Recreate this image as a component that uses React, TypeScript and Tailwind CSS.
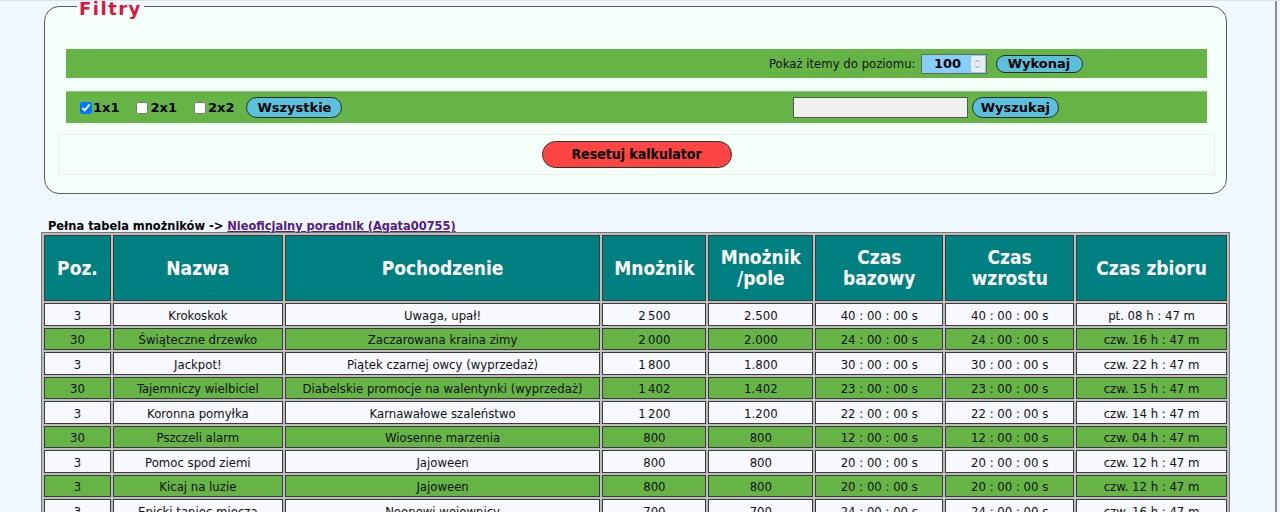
import React from "react";

const rows: { c: string[]; g: boolean }[] = [
  { c: ["3", "Krokoskok", "Uwaga, upał!", "2\u2009500", "2.500", "40 : 00 : 00 s", "40 : 00 : 00 s", "pt. 08 h : 47 m"], g: false },
  { c: ["30", "Świąteczne drzewko", "Zaczarowana kraina zimy", "2\u2009000", "2.000", "24 : 00 : 00 s", "24 : 00 : 00 s", "czw. 16 h : 47 m"], g: true },
  { c: ["3", "Jackpot!", "Piątek czarnej owcy (wyprzedaż)", "1\u2009800", "1.800", "30 : 00 : 00 s", "30 : 00 : 00 s", "czw. 22 h : 47 m"], g: false },
  { c: ["30", "Tajemniczy wielbiciel", "Diabelskie promocje na walentynki (wyprzedaż)", "1\u2009402", "1.402", "23 : 00 : 00 s", "23 : 00 : 00 s", "czw. 15 h : 47 m"], g: true },
  { c: ["3", "Koronna pomyłka", "Karnawałowe szaleństwo", "1\u2009200", "1.200", "22 : 00 : 00 s", "22 : 00 : 00 s", "czw. 14 h : 47 m"], g: false },
  { c: ["30", "Pszczeli alarm", "Wiosenne marzenia", "800", "800", "12 : 00 : 00 s", "12 : 00 : 00 s", "czw. 04 h : 47 m"], g: true },
  { c: ["3", "Pomoc spod ziemi", "Jajoween", "800", "800", "20 : 00 : 00 s", "20 : 00 : 00 s", "czw. 12 h : 47 m"], g: false },
  { c: ["3", "Kicaj na luzie", "Jajoween", "800", "800", "20 : 00 : 00 s", "20 : 00 : 00 s", "czw. 12 h : 47 m"], g: true },
  { c: ["3", "Epicki taniec miecza", "Neonowi wojownicy", "700", "700", "24 : 00 : 00 s", "24 : 00 : 00 s", "czw. 16 h : 47 m"], g: false },
];

const widths = ["w-[67px]", "w-[170px]", "w-[316px]", "w-[104px]", "w-[105px]", "w-[128px]", "w-[129px]", "w-[151px]"];

const verdana = { fontFamily: "'DejaVu Sans', Verdana, sans-serif" };
const tahoma = { fontFamily: "'DejaVu Sans Condensed', 'DejaVu Sans', Tahoma, sans-serif" };

function Header({ h }: { h: string }) {
  const parts = h.split("|");
  return (
    <>
      {parts.map((p, i) => (
        <React.Fragment key={i}>
          {i > 0 && <br />}
          {p}
        </React.Fragment>
      ))}
    </>
  );
}

export default function App() {
  return (
    <div className="min-h-[512px] w-full bg-[#f0f8ff] border-t border-[#e2e2e2]" style={tahoma}>
      <div className="w-[1277px] min-h-[511px] border-r-2 border-[#8c8c8c] pl-[41px] pr-[45px]">
        <fieldset className="mx-[3px] rounded-[15px] border border-[#5a5a5a] bg-[#f5fffa] pl-[21px] pr-[19px] pt-[37px] pb-[18px]">
          <legend
            className="ml-[11px] px-[2px] text-[18px] font-bold leading-[11px] tracking-[1.5px] text-[#dc143c]"
            style={verdana}
          >
            <span className="inline-block translate-y-[2px]">Filtry</span>
          </legend>

          <div className="grid h-[29px] grid-cols-2 bg-[#66b445]">
            <div />
            <div className="flex items-center justify-center pl-[8px]">
              <span className="text-[13px] text-[#111]">Pokaż itemy do poziomu:</span>
              <div className="ml-[5px] flex h-[20px] w-[66px] items-center border border-[#666] bg-[#87cefa]">
                <input
                  type="text"
                  defaultValue="100"
                  className="h-full w-[48px] bg-transparent pl-[4px] text-center text-[13px] font-bold text-black outline-none"
                  style={verdana}
                />
                <span className="ml-auto mr-[1px] flex h-[16px] w-[14px] flex-col items-center justify-center rounded-[2px] bg-[#e9eef2]">
                  <svg width="7" height="12" viewBox="0 0 7 12" fill="none" stroke="#9a9a9a" strokeWidth="1">
                    <path d="M1 4.5 L3.5 2 L6 4.5" />
                    <path d="M1 7.5 L3.5 10 L6 7.5" />
                  </svg>
                </span>
              </div>
              <button
                className="ml-[9px] h-[18px] w-[87px] rounded-full border border-[#2a2a2a] bg-[#5bc0de] text-[13px] font-bold leading-[16px] text-black"
                style={verdana}
              >
                Wykonaj
              </button>
            </div>
          </div>

          <div className="mt-[13px] grid h-[32px] grid-cols-2 border-t border-[#8fcc7a] bg-[#66b445]">
            <div className="flex items-center pl-[10px] text-[13px] font-bold text-black" style={verdana}>
              <label className="flex items-center">
                <input type="checkbox" defaultChecked className="m-[3px_3px_3px_4px] h-[12px] w-[12px]" />
                <span className="ml-[-2px]">1x1</span>
              </label>
              <label className="ml-[13px] flex items-center">
                <input type="checkbox" className="m-[3px_3px_3px_4px] h-[12px] w-[12px]" />
                <span className="ml-[-1px]">2x1</span>
              </label>
              <label className="ml-[13px] flex items-center">
                <input type="checkbox" className="m-[3px_3px_3px_4px] h-[12px] w-[12px]" />
                <span className="ml-[-1px]">2x2</span>
              </label>
              <button className="ml-[12px] h-[21px] w-[96px] rounded-full border border-[#2a2a2a] bg-[#5bc0de] text-[13px] font-bold leading-[18px] text-black">
                Wszystkie
              </button>
            </div>
            <div className="flex items-center justify-center pl-[8px]">
              <input type="text" className="h-[21px] w-[175px] border border-[#555] bg-[#f0f0f0]" />
              <button
                className="ml-[4px] h-[21px] w-[87px] rounded-full border border-[#2a2a2a] bg-[#5bc0de] text-[13px] font-bold leading-[18px] text-black"
                style={verdana}
              >
                Wyszukaj
              </button>
            </div>
          </div>

          <div className="mx-[-8px] mt-[11px] flex h-[41px] items-center justify-center border border-[#e6efe9]">
            <button className="h-[27px] w-[190px] rounded-full border border-[#333] bg-[#ff4444] text-[14px] font-bold text-black">
              Resetuj kalkulator
            </button>
          </div>
        </fieldset>

        <div className="mt-[22px] pl-[7px] pt-[4px] text-[12.7px] font-bold leading-[12px] text-black">
          Pełna tabela mnożników -&gt;{" "}
          <a href="#" className="text-[#551a8b] underline">
            Nieoficjalny poradnik (Agata00755)
          </a>
        </div>

        <table className="table-fixed border-separate border-spacing-[2px] border border-[#777] bg-[#bdbdbd]">
          <thead>
            <tr>
              {["Poz.", "Nazwa", "Pochodzenie", "Mnożnik", "Mnożnik|/pole", "Czas|bazowy", "Czas|wzrostu", "Czas zbioru"].map(
                (h, i) => (
                  <th
                    key={h}
                    className={`${widths[i]} h-[66px] border border-[#3a3a3a] bg-[#008080] p-0 text-center text-[19px] font-bold leading-[21px] text-white`}
                  >
                    <Header h={h} />
                  </th>
                )
              )}
            </tr>
          </thead>
          <tbody>
            {rows.map((r, ri) => (
              <tr key={ri}>
                {r.c.map((v, ci) => (
                  <td
                    key={ci}
                    className={`h-[22.5px] border border-[#3a3a3a] p-0 pt-[3px] text-center text-[13px] leading-[16px] text-[#111] ${
                      r.g ? "bg-[#66b445]" : "bg-[#f8f8ff]"
                    }`}
                  >
                    {v}
                  </td>
                ))}
              </tr>
            ))}
          </tbody>
        </table>
      </div>
    </div>
  );
}
